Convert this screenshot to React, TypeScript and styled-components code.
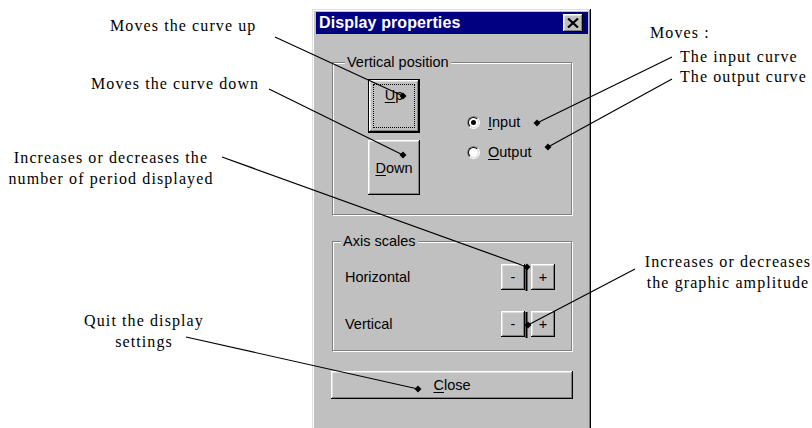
import React from "react";
import styled, { createGlobalStyle } from "styled-components";

const GlobalStyle = createGlobalStyle`
  html, body {
    margin: 0;
    padding: 0;
    background: #fff;
  }
  body {
    width: 812px;
    height: 428px;
    overflow: hidden;
  }
`;

const Stage = styled.div`
  position: relative;
  width: 812px;
  height: 428px;
  overflow: hidden;
  background: #fff;
`;

// ---- callout notes around the dialog ----

const Note = styled.div<{ $x: number; $y: number; $w?: number; $align?: string }>`
  position: absolute;
  left: ${(p) => p.$x}px;
  top: ${(p) => p.$y}px;
  width: ${(p) => (p.$w ? `${p.$w}px` : "auto")};
  text-align: ${(p) => p.$align ?? "left"};
  font-family: "Liberation Serif", "Times New Roman", serif;
  font-size: 16px;
  letter-spacing: 1.1px;
  line-height: 21px;
  color: #000;
  white-space: nowrap;
`;

const NoteLine = styled.div<{ $indent?: number; $gap?: number }>`
  padding-left: ${(p) => p.$indent ?? 0}px;
  margin-top: ${(p) => p.$gap ?? 0}px;
  line-height: 20px;
`;

// ---- the win95 dialog ----

const Window = styled.div`
  position: absolute;
  left: 312px;
  top: 9px;
  width: 279px;
  height: 440px;
  box-sizing: border-box;
  padding: 3px 3px 0 4px;
  background: #c0c0c0;
  box-shadow: inset -1px -1px #000, inset 1px 1px #dfdfdf,
    inset -2px -2px #808080, inset 2px 2px #fff;
  font-family: "Liberation Sans", Arial, sans-serif;
  font-size: 14.5px;
  color: #000;
`;

const TitleBar = styled.div`
  height: 22px;
  display: flex;
  align-items: center;
  justify-content: space-between;
  padding: 0 5px 0 3px;
  background: #000080;
`;

const TitleText = styled.span`
  color: #fff;
  font-weight: bold;
  font-size: 16px;
  letter-spacing: 0.1px;
`;

const Body = styled.div`
  padding: 20px 16px 0 16px;
  display: flex;
  flex-direction: column;
`;

const Group = styled.fieldset<{ $top?: number }>`
  margin: ${(p) => p.$top ?? 0}px 0 0 0;
  padding: 0;
  min-width: 0;
  border: 1px solid #808080;
  box-shadow: inset 1px 1px #fff, 1px 1px #fff;
`;

const Legend = styled.legend<{ $offset: number }>`
  margin-left: ${(p) => p.$offset}px;
  padding: 0 2px;
  line-height: 16px;
  background: #c0c0c0;
`;

const VerticalInner = styled.div`
  display: flex;
  align-items: center;
  padding: 9px 0 19px 35px;
`;

const ButtonStack = styled.div`
  display: flex;
  flex-direction: column;
  gap: 7px;
`;

const RadioStack = styled.div`
  display: flex;
  flex-direction: column;
  gap: 12px;
  margin-left: 47px;
`;

const RadioRow = styled.label`
  display: flex;
  align-items: center;
  gap: 8px;
  height: 18px;
`;

const RadioBox = styled.span<{ $on?: boolean }>`
  position: relative;
  width: 13px;
  height: 13px;
  box-sizing: border-box;
  border-radius: 50%;
  border: 1px solid;
  border-color: #808080 #fff #fff #808080;

  &::before {
    content: "";
    position: absolute;
    inset: 0;
    box-sizing: border-box;
    border-radius: 50%;
    border: 1px solid;
    border-color: #000 #dfdfdf #dfdfdf #000;
    background: #fff;
  }

  &::after {
    content: "";
    display: ${(p) => (p.$on ? "block" : "none")};
    position: absolute;
    left: 3px;
    top: 3px;
    width: 5px;
    height: 5px;
    border-radius: 50%;
    background: #000;
  }
`;

const ScaleInner = styled.div`
  display: flex;
  flex-direction: column;
  gap: 21px;
  padding: 15px 16px 13px 12px;
`;

const ScaleRow = styled.div`
  display: flex;
  align-items: center;
  justify-content: space-between;
  height: 26px;
`;

const StepPair = styled.div`
  display: flex;
  gap: 6px;
`;

const Key = styled.span`
  text-decoration: underline;
  text-underline-offset: 2px;
`;

const Btn = styled.button<{ $w?: number; $h?: number }>`
  box-sizing: border-box;
  width: ${(p) => (p.$w ? `${p.$w}px` : "100%")};
  height: ${(p) => p.$h ?? 26}px;
  padding: 0;
  border: none;
  background: #c0c0c0;
  font: inherit;
  color: #000;
  display: flex;
  align-items: center;
  justify-content: center;
  box-shadow: inset -1px -1px #000, inset 1px 1px #fff,
    inset -2px -2px #808080, inset 2px 2px #dfdfdf;
`;

const DefaultBtn = styled(Btn)`
  border: 1px solid #000;
  padding-bottom: 22px;
  outline: 1px dotted #000;
  outline-offset: -6px;
`;

const CloseBtn = styled(Btn)`
  width: 242px;
  margin: 20px -1px 0;
`;

const TitleClose = styled(Btn)`
  width: 20px;
  height: 18px;
`;

// ---- leader lines ----

const Overlay = styled.svg`
  position: absolute;
  left: 0;
  top: 0;
  pointer-events: none;
`;

type Leader = { x1: number; y1: number; x2: number; y2: number; dot?: boolean };

const leaders: Leader[] = [
  { x1: 275, y1: 37, x2: 403, y2: 96, dot: true },
  { x1: 269, y1: 89, x2: 403, y2: 155, dot: true },
  { x1: 222, y1: 157, x2: 527, y2: 267, dot: true },
  { x1: 526.5, y1: 267, x2: 526.5, y2: 291 },
  { x1: 672, y1: 57, x2: 537, y2: 123, dot: true },
  { x1: 672, y1: 79, x2: 548, y2: 147, dot: true },
  { x1: 635, y1: 269, x2: 528, y2: 325, dot: true },
  { x1: 526.5, y1: 312, x2: 526.5, y2: 338 },
  { x1: 186, y1: 337, x2: 418, y2: 389, dot: true },
];

function Leaders() {
  return (
    <Overlay width={812} height={428} viewBox="0 0 812 428">
      {leaders.map((l, i) => (
        <g key={i}>
          <line
            x1={l.x1}
            y1={l.y1}
            x2={l.x2}
            y2={l.y2}
            stroke="#000"
            strokeWidth={l.dot ? 1.2 : 2}
          />
          {l.dot && (
            <polygon
              points={`${l.x2},${l.y2 - 3.5} ${l.x2 + 3.5},${l.y2} ${l.x2},${l.y2 + 3.5} ${l.x2 - 3.5},${l.y2}`}
              fill="#000"
            />
          )}
        </g>
      ))}
    </Overlay>
  );
}

export default function App() {
  return (
    <Stage>
      <GlobalStyle />

      <Note $x={110} $y={15}>Moves the curve up</Note>
      <Note $x={91} $y={73}>Moves the curve down</Note>
      <Note $x={6} $y={147} $w={210} $align="center">
        Increases or decreases the
        <br />
        number of period displayed
      </Note>
      <Note $x={82} $y={310} $w={124} $align="center">
        Quit the display
        <br />
        settings
      </Note>
      <Note $x={650} $y={23}>
        <NoteLine>Moves :</NoteLine>
        <NoteLine $indent={30} $gap={4}>The input curve</NoteLine>
        <NoteLine $indent={30}>The output curve</NoteLine>
      </Note>
      <Note $x={642} $y={251} $w={172} $align="center">
        Increases or decreases
        <br />
        the graphic amplitude
      </Note>

      <Window>
        <TitleBar>
          <TitleText>Display properties</TitleText>
          <TitleClose>
            <svg width="12" height="10" viewBox="0 0 12 10">
              <path d="M1 0.5 L11 9.5 M11 0.5 L1 9.5" stroke="#000" strokeWidth="2.2" />
            </svg>
          </TitleClose>
        </TitleBar>

        <Body>
          <Group>
            <Legend $offset={12}>Vertical position</Legend>
            <VerticalInner>
              <ButtonStack>
                <DefaultBtn $w={52} $h={54}>
                  <Key>U</Key>p
                </DefaultBtn>
                <Btn $w={52} $h={55}>
                  <Key>D</Key>own
                </Btn>
              </ButtonStack>
              <RadioStack>
                <RadioRow>
                  <RadioBox $on />
                  <span>
                    <Key>I</Key>nput
                  </span>
                </RadioRow>
                <RadioRow>
                  <RadioBox />
                  <span>
                    <Key>O</Key>utput
                  </span>
                </RadioRow>
              </RadioStack>
            </VerticalInner>
          </Group>

          <Group $top={18}>
            <Legend $offset={8}>Axis scales</Legend>
            <ScaleInner>
              <ScaleRow>
                <span>Horizontal</span>
                <StepPair>
                  <Btn $w={24}>-</Btn>
                  <Btn $w={24}>+</Btn>
                </StepPair>
              </ScaleRow>
              <ScaleRow>
                <span>Vertical</span>
                <StepPair>
                  <Btn $w={24}>-</Btn>
                  <Btn $w={24}>+</Btn>
                </StepPair>
              </ScaleRow>
            </ScaleInner>
          </Group>

          <CloseBtn $h={28}>
            <Key>C</Key>lose
          </CloseBtn>
        </Body>
      </Window>

      <Leaders />
    </Stage>
  );
}
